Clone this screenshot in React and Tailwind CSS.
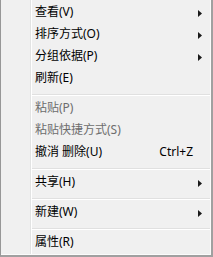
function Arrow() {
  return (
    <svg width="4" height="7" viewBox="0 0 4 7" className="block">
      <path d="M0 0 L4 3.5 L0 7 Z" fill="#1a1a1a" />
    </svg>
  );
}

function Item({ label, disabled, arrow, shortcut }) {
  return (
    <div className={`h-[22px] flex items-center justify-between pl-[3px] ${shortcut ? 'pr-[17px]' : 'pr-[8px]'} ${disabled ? 'text-[#6d6d6d]' : 'text-black'}`}>
      <span className="leading-[14px] -translate-y-[1px]">{label}</span>
      {arrow && <Arrow />}
      {shortcut && <span className="leading-[14px] -translate-y-[1px]">{shortcut}</span>}
    </div>
  );
}

function Sep() {
  return (
    <div className="h-[8px] pt-[4px]">
      <div className="h-[1px] bg-[#e0e0e0]" />
      <div className="h-[1px] bg-white" />
    </div>
  );
}

export default function App() {
  return (
    <div className="w-[213px] h-[257px] bg-[#f0f0f0] border-l border-l-[#979797] border-r-2 border-b-2 border-r-[#a0a0a0] border-b-[#a0a0a0] font-['Noto_Sans','Noto_Sans_CJK_SC',sans-serif] text-[12px]">
      <div className="h-full flex border-r border-b border-[#fbfbfb]">
        <div className="w-[29px] flex-none" />
        <div className="flex-none w-[1px] bg-[#e2e3e3]" />
        <div className="flex-none w-[1px] bg-white" />
        <div className="flex-1 pt-[2px]">
          <Item label="查看(V)" arrow />
          <Item label="排序方式(O)" arrow />
          <Item label="分组依据(P)" arrow />
          <Item label="刷新(E)" />
          <Sep />
          <Item label="粘贴(P)" disabled />
          <Item label="粘贴快捷方式(S)" disabled />
          <Item label="撤消 删除(U)" shortcut="Ctrl+Z" />
          <Sep />
          <Item label="共享(H)" arrow />
          <Sep />
          <Item label="新建(W)" arrow />
          <Sep />
          <Item label="属性(R)" />
        </div>
      </div>
    </div>
  );
}
